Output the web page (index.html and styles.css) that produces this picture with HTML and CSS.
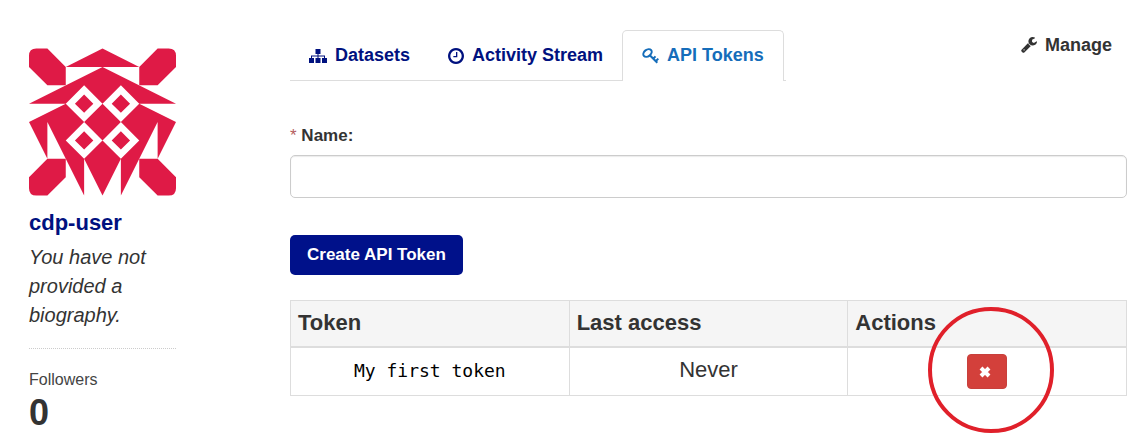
FILE: index.html
```html
<!DOCTYPE html>
<html lang="en">
<head>
    <meta charset="UTF-8">
    <meta name="viewport" content="width=device-width, initial-scale=1.0">
    <title>API Tokens - cdp-user</title>
    <link rel="stylesheet" href="styles.css">
</head>
<body>
    <div class="page">
        <aside class="profile">
            <svg class="avatar" viewBox="0 0 8 8" role="img" aria-label="cdp-user">
                <path d="M.4 0H1L2 1V2H1L0 1V.4Q0 0 .4 0zM7.6 0H7L6 1V2H7L8 1V.4Q8 0 7.6 0zM.4 8H1L2 7V6H1L0 7V7.6Q0 8 .4 8zM7.6 8H7L6 7V6H7L8 7V7.6Q8 8 7.6 8z"/>
                <path d="M2 1L4 0L6 1z"/>
                <path d="M4 1L0 3H2L0 4L1 6V4L3 8V6L4 8L5 6V8L7 4V6L8 4L6 3H8z"/>
                <path class="avatar-gap" d="M3 2l1 1-1 1-1-1zM5 2l1 1-1 1-1-1zM3 4l1 1-1 1-1-1zM5 4l1 1-1 1-1-1z"/>
                <path d="M3 2.500l.5.5-.5.5-.5-.5zM5 2.500l.5.5-.5.5-.5-.5zM3 4.500l.5.5-.5.5-.5-.5zM5 4.500l.5.5-.5.5-.5-.5z"/>
            </svg>
            <h1 class="username">cdp-user</h1>
            <p class="bio">You have not provided a biography.</p>
            <dl class="followers">
                <dt>Followers</dt>
                <dd>0</dd>
            </dl>
        </aside>

        <main class="content">
            <header class="page-header">
                <nav class="tabs">
                    <a href="#datasets" class="tab">
                        <svg class="icon-sitemap" viewBox="0 0 18 16" aria-hidden="true">
                            <path d="M6.500 1h5v5h-2v1.500h6.500V10H18v5h-5v-5h2V8.500H9.500V10h2v5h-5v-5h2V8.500H3V10H5v5H0v-5h2V7.500h6.500V6h-2z"/>
                        </svg>
                        Datasets
                    </a>
                    <a href="#activity" class="tab">
                        <svg class="icon-clock" viewBox="128 128 1536 1536" aria-hidden="true">
                            <path d="M1024 544v448q0 14-9 23t-23 9h-320q-14 0-23-9t-9-23v-64q0-14 9-23t23-9h224v-352q0-14 9-23t23-9h64q14 0 23 9t9 23zm416 352q0-148-73-273t-198-198-273-73-273 73-198 198-73 273 73 273 198 198 273 73 273-73 198-198 73-273zm224 0q0 209-103 385.500t-279.500 279.500-385.500 103-385.500-103-279.500-279.500-103-385.500 103-385.500 279.500-279.500 385.500-103 385.500 103 279.500 279.500 103 385.500z"/>
                        </svg>
                        Activity Stream
                    </a>
                    <a href="#tokens" class="tab active" aria-current="page">
                        <svg class="icon-key" viewBox="0 0 17 16" aria-hidden="true">
                            <ellipse cx="5.500" cy="5" rx="4.600" ry="3.300" transform="rotate(-38 5.500 5)"/>
                            <path d="M7.800 7.300L15.300 14.800M11.200 10.700l2.300-2.300M13.700 13.200l2.600-2.600"/>
                        </svg>
                        API Tokens
                    </a>
                </nav>
                <a href="#manage" class="manage">
                    <svg class="icon-wrench" viewBox="64 128 1664 1664" aria-hidden="true">
                        <path d="M448 1472q0-26-19-45t-45-19-45 19-19 45 19 45 45 19 45-19 19-45zm644-420l-682 682q-37 37-90 37-52 0-91-37l-106-108q-38-36-38-90 0-53 38-91l681-681q39 98 114.500 173.500t173.500 114.500zm634-435q0 39-23 106-47 134-164.500 217.500t-258.500 83.500q-185 0-316.500-131.500t-131.500-316.500 131.500-316.500 316.500-131.500q58 0 121.500 16.500t107.500 46.500q16 11 16 28t-16 28l-293 169v224l193 107q5-3 79-48.500t135.500-81 70.500-35.500q15 0 23.500 10t8.500 25z"/>
                    </svg>
                    Manage
                </a>
            </header>

            <form class="token-form">
                <label for="name"><span class="required">*</span> Name:</label>
                <input type="text" id="name" name="name" required>
                <button type="submit" class="btn-create">Create API Token</button>
            </form>

            <table class="tokens">
                <thead>
                    <tr>
                        <th>Token</th>
                        <th>Last access</th>
                        <th>Actions</th>
                    </tr>
                </thead>
                <tbody>
                    <tr>
                        <td><code>My first token</code></td>
                        <td>Never</td>
                        <td>
                            <div class="revoke">
                                <button type="button" class="btn-danger" aria-label="Revoke token">
                                    <svg class="icon-remove" viewBox="0 0 12 12" aria-hidden="true">
                                        <path d="M2 2l8 8M10 2l-8 8"/>
                                    </svg>
                                </button>
                                <span class="highlight"></span>
                            </div>
                        </td>
                    </tr>
                </tbody>
            </table>
        </main>
    </div>
</body>
</html>
```
FILE: styles.css
```css
* {
    box-sizing: border-box;
}

body {
    margin: 0;
    font-family: "Liberation Sans", Arial, sans-serif;
    font-size: 18px;
    color: #333;
    background: #fff;
}

a {
    color: #00117f;
    text-decoration: none;
}

svg {
    fill: currentColor;
    flex: none;
}

.page {
    display: grid;
    grid-template-columns: 147px 1fr;
    column-gap: 114px;
    padding: 0 19px 0 29px;
}

/* Sidebar */
.profile {
    padding-top: 48px;
}

.avatar {
    display: block;
    width: 100%;
    height: 148px;
    fill: #df1a46;
}

.avatar .avatar-gap {
    fill: #fff;
}

.username {
    margin: 13px 0 6px;
    font-size: 22px;
    line-height: 28px;
    color: #00117f;
}

.bio {
    margin: 0;
    padding-bottom: 18px;
    border-bottom: 1px dotted #ccc;
    font-size: 20px;
    font-style: italic;
    line-height: 29px;
}

.followers {
    margin: 21px 0 0;
}

.followers dt {
    font-size: 16px;
    line-height: 20px;
    color: #444;
}

.followers dd {
    margin: 3px 0 0;
    font-size: 36px;
    font-weight: bold;
    line-height: 40px;
}

/* Tabs */
.content {
    padding-top: 30px;
}

.page-header {
    display: flex;
    justify-content: space-between;
    align-items: flex-start;
}

.tabs {
    display: flex;
    padding-right: 2px;
    border-bottom: 1px solid #ddd;
}

.tab {
    display: flex;
    align-items: center;
    gap: 8px;
    height: 51px;
    margin-bottom: -1px;
    padding: 0 19px;
    font-weight: bold;
}

.tab.active {
    padding-bottom: 1px;
    border: 1px solid #ddd;
    border-bottom: 0;
    border-radius: 5px 5px 0 0;
    background: #fff;
    color: #156dba;
}

.icon-sitemap {
    width: 18px;
    height: 16px;
}

.icon-clock {
    width: 16px;
    height: 16px;
}

.icon-key {
    width: 17px;
    height: 16px;
    fill: none;
    stroke: currentColor;
    stroke-width: 2;
}

.manage {
    display: flex;
    align-items: center;
    gap: 8px;
    height: 30px;
    padding-right: 15px;
    font-weight: bold;
    color: #333;
}

.icon-wrench {
    width: 16px;
    height: 16px;
}

/* Form */
.token-form {
    display: flex;
    flex-direction: column;
    align-items: flex-start;
    margin-top: 43px;
}

.token-form label {
    font-size: 17px;
    font-weight: bold;
    line-height: 24px;
}

.required {
    font-weight: normal;
    color: #b55d60;
}

.token-form input {
    width: 100%;
    height: 43px;
    margin: 7px 0 37px;
    padding: 4px 12px;
    border: 1px solid #ccc;
    border-radius: 5px;
    box-shadow: inset 0 1px 1px rgba(0, 0, 0, 0.08);
    font: inherit;
}

.btn-create {
    height: 40px;
    padding: 0 17px;
    border: 0;
    border-radius: 5px;
    background: #00118a;
    color: #fff;
    font: bold 17px "Liberation Sans", Arial, sans-serif;
    cursor: pointer;
}

/* Token table */
.tokens {
    width: 100%;
    margin-top: 25px;
    border-collapse: collapse;
    table-layout: fixed;
    font-size: 22px;
}

.tokens th,
.tokens td {
    padding: 6px 7px;
    border: 1px solid #ddd;
    line-height: 32px;
}

.tokens th {
    padding-bottom: 7px;
    border-bottom-width: 2px;
    background: #f5f5f5;
    text-align: left;
}

.tokens td {
    text-align: center;
    vertical-align: top;
}

.tokens code {
    font-family: "DejaVu Sans Mono", monospace;
    font-size: 18px;
    color: #000;
}

.revoke {
    display: inline-block;
    position: relative;
    vertical-align: top;
}

.btn-danger {
    display: flex;
    align-items: center;
    width: 40px;
    height: 35px;
    padding: 0 11px;
    border: 1px solid #c8403c;
    border-radius: 4px;
    background: #d3403b;
    color: #fff;
    cursor: pointer;
}

.icon-remove {
    width: 12px;
    height: 12px;
    stroke: currentColor;
    stroke-width: 4;
}

/* Ring drawn round the revoke button */
.highlight {
    position: absolute;
    top: -47px;
    left: -39px;
    width: 126px;
    height: 126px;
    border: 4px solid #e0202a;
    border-radius: 50%;
    pointer-events: none;
}
```
